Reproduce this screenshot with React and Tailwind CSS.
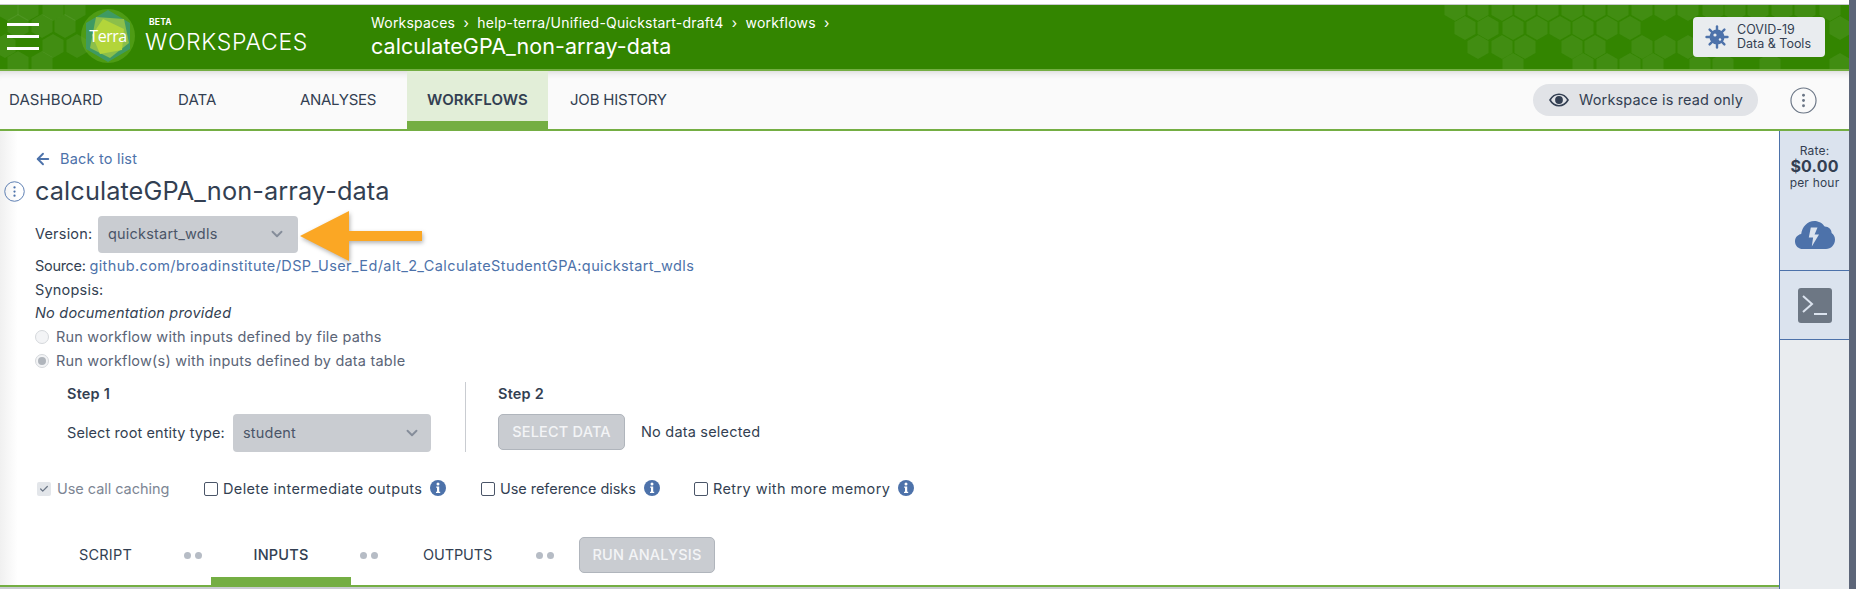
import { ArrowLeft, ChevronDown, Check } from 'lucide-react';

const leftHexes = [
  [8, 9], [28, 9], [53, 9], [75, 9],
  [42, 26], [65, 26], [18, 26],
  [53, 46], [77, 46], [5, 46],
  [18, 63], [42, 63],
];

const rightRows = [
  [9, [55, 78, 102, 125, 148, 172, 195, 218, 242, 265, 288, 313, 335, 358, 382, 405, 430]],
  [28, [65, 88, 113, 137, 160, 183, 207, 230, 440]],
  [47, [78, 102, 125, 172, 195, 242, 265, 288]],
  [65, [113, 183, 207, 230, 253, 300, 323, 370, 440]],
];

function hexPoints(cx, cy) {
  return [
    [cx, cy - 12],
    [cx + 10.5, cy - 6],
    [cx + 10.5, cy + 6],
    [cx, cy + 12],
    [cx - 10.5, cy + 6],
    [cx - 10.5, cy - 6],
  ].join(' ');
}

function HexPattern() {
  return (
    <svg className="absolute inset-0 w-full h-full" viewBox="0 0 1849 64" preserveAspectRatio="none">
      <g fill="#ffffff" fillOpacity="0.07" transform="translate(0,-5)">
        {leftHexes.map(([x, y]) => (
          <polygon key={`l${x}-${y}`} points={hexPoints(x, y)} />
        ))}
        {rightRows.map(([y, xs]) =>
          xs.map((x) => <polygon key={`r${x}-${y}`} points={hexPoints(1400 + x, y)} />)
        )}
      </g>
    </svg>
  );
}

function Hamburger() {
  return (
    <div className="relative ml-[7px] -mt-[2px] w-[32px] flex flex-col gap-[9px]">
      <span className="h-[3px] bg-white" />
      <span className="h-[3px] bg-white" />
      <span className="h-[3px] bg-white" />
    </div>
  );
}

function TerraLogo() {
  return (
    <div className="relative w-[56px] h-[62px] flex items-center justify-center">
      <svg width="56" height="62" viewBox="0 0 56 62" className="absolute inset-0">
        <circle cx="28" cy="31" r="27" fill="#6fb52c" opacity="0.45" />
        <polygon points="28,5 50,18 50,44 28,57 6,44 6,18" fill="#3f9a62" />
        <polygon points="16,12 44,14 49,38 30,53 10,43" fill="#8cbf4a" />
        <polygon points="23,14 44,24 42,45 20,49 12,30" fill="#b3d53a" />
      </svg>
      <span className="relative text-white text-[16px] [font-family:'Open_Sans',sans-serif] tracking-[-0.5px]">Terra</span>
    </div>
  );
}

function VirusIcon() {
  return (
    <svg width="24" height="24" viewBox="0 0 24 24" fill="#4d72aa">
      <circle cx="12" cy="12" r="7.5" />
      <g stroke="#4d72aa" strokeWidth="2.4" strokeLinecap="round">
        <line x1="12" y1="1.5" x2="12" y2="22.5" />
        <line x1="1.5" y1="12" x2="22.5" y2="12" />
        <line x1="4.6" y1="4.6" x2="19.4" y2="19.4" />
        <line x1="19.4" y1="4.6" x2="4.6" y2="19.4" />
      </g>
      <circle cx="10" cy="10" r="1.6" fill="#e9ecef" />
      <circle cx="15" cy="14.5" r="1.2" fill="#e9ecef" />
    </svg>
  );
}

function EyeIcon() {
  return (
    <svg width="20" height="14" viewBox="0 0 20 14">
      <path d="M1 7c2.2-3.8 5.3-5.7 9-5.7S16.800 3.200 19 7c-2.200 3.800-5.300 5.700-9 5.700S3.200 10.800 1 7z" fill="none" stroke="#333f52" strokeWidth="1.6" />
      <circle cx="10" cy="7" r="3.900" fill="#333f52" />
    </svg>
  );
}

function DotsCircle({ size, color }) {
  return (
    <svg width={size} height={size} viewBox="0 0 28 28" fill="none">
      <circle cx="14" cy="14" r="13" stroke={color} strokeWidth="1.200" />
      <g fill={color}>
        <circle cx="14" cy="8.500" r="1.500" />
        <circle cx="14" cy="14" r="1.500" />
        <circle cx="14" cy="19.500" r="1.500" />
      </g>
    </svg>
  );
}

function InfoIcon() {
  return (
    <svg width="16" height="16" viewBox="0 0 16 16" className="shrink-0">
      <circle cx="8" cy="8" r="8" fill="#4d72aa" />
      <circle cx="8" cy="4" r="1.500" fill="#fff" />
      <path d="M6.200 6.500h3v5.200h1v1.300H6v-1.300h1V7.800h-.8z" fill="#fff" />
    </svg>
  );
}

function CloudIcon() {
  return (
    <svg width="40" height="28" viewBox="0 0 40 28">
      <path
        d="M8 28C3.500 28 0 24.600 0 20.400c0-3.700 2.600-6.700 6.200-7.400C7 6 12.400 0 19.300 0c4.500 0 8.300 2.200 10.400 5.600 4.100.1 6.900 2.900 6.900 6.500 2.100 1.300 3.400 3.700 3.400 6.400 0 5.300-4 9.500-9 9.500z"
        fill="#4d72aa"
      />
      <path d="M22.500 6.500h-6.700l-2 10h4.300l-1.300 9 7.200-12h-4.400z" fill="#dbe3ee" />
    </svg>
  );
}

function TerminalIcon() {
  return (
    <div className="w-[34px] h-[35px] rounded-[3px] bg-[#6d7784] flex items-center justify-center">
      <svg width="26" height="22" viewBox="0 0 26 22" fill="none" stroke="#dbe3ee" strokeWidth="2">
        <path d="M1 2l9 8-9 8" />
        <path d="M12 20h13" />
      </svg>
    </div>
  );
}

function CheckRow({ label, info, checked, className, labelClass }) {
  return (
    <div className={`flex items-center ${className}`}>
      {checked ? (
        <span className="w-[14px] h-[14px] rounded-[2px] bg-[#e3e6ea] flex items-center justify-center text-[#6b7686]">
          <Check size={10} strokeWidth={3} />
        </span>
      ) : (
        <span className="w-[14px] h-[14px] rounded-[2px] border border-[#4a5568] bg-white" />
      )}
      <span className={`ml-[5px] whitespace-nowrap ${labelClass} ${checked ? 'text-[#7d8694] ml-[6px]' : 'text-[#333f52]'}`}>{label}</span>
      {info && (
        <span className="ml-[8px] -mt-[3px]">
          <InfoIcon />
        </span>
      )}
    </div>
  );
}

function Radio({ label, selected }) {
  return (
    <div className="flex items-center h-[24px]">
      <span className="w-[14px] h-[14px] rounded-full border border-[#d5d8dc] bg-[#f3f4f6] flex items-center justify-center">
        {selected && <span className="w-[8px] h-[8px] rounded-full bg-[#b0b5bc]" />}
      </span>
      <span className="ml-[7px] text-[#5b6577]">{label}</span>
    </div>
  );
}

function Dots({ className }) {
  return (
    <div className={`w-[18px] flex justify-between ${className}`}>
      <span className="w-[7px] h-[7px] rounded-full bg-[#b6bcc5]" />
      <span className="w-[7px] h-[7px] rounded-full bg-[#b6bcc5]" />
    </div>
  );
}

function Tab({ label, className }) {
  return (
    <div className={`h-[50px] pt-[8px] flex items-center whitespace-nowrap ${className}`}>
      {label}
    </div>
  );
}

export default function App() {
  return (
    <div className="relative w-[1856px] h-[589px] flex overflow-hidden bg-white text-[#333f52] text-[14.500px] tracking-[0.2px] [font-family:Inter,sans-serif]">
      <div className="w-[1849px] flex flex-col">
        <div className="h-[5px] bg-white border-b border-[#c8c9cc]" />

        {/* Green header */}
        <header className="relative h-[66px] bg-[#338500] border-b-2 border-[#74ae43] flex items-center text-white shrink-0">
          <HexPattern />
          <Hamburger />
          <div className="relative ml-[41px] -mt-[2px]">
            <TerraLogo />
          </div>
          <div className="relative ml-[9px] flex flex-col -mt-[2px]">
            <span className="ml-[4px] text-[8.500px] font-bold leading-[12px]">BETA</span>
            <span className="w-[162px] text-[23px] leading-[28px] font-light tracking-[0.7px] whitespace-nowrap">WORKSPACES</span>
          </div>
          <div className="relative ml-[64px] flex flex-col -mt-[2px]">
            <span className="text-[14px] leading-[20px] tracking-[0.2px] whitespace-nowrap">Workspaces &nbsp;›&nbsp; help-terra/Unified-Quickstart-draft4 &nbsp;›&nbsp; workflows &nbsp;›</span>
            <span className="text-[21.500px] leading-[26px] tracking-[0.05px] whitespace-nowrap">calculateGPA_non-array-data</span>
          </div>
          <div className="relative ml-auto mr-[24px] w-[132px] h-[40px] rounded-[4px] bg-[#e9ecef] flex items-center pl-[12px] text-[#333f52]">
            <VirusIcon />
            <div className="ml-[8px] flex flex-col text-[12.500px] leading-[14px] tracking-normal">
              <span>COVID-19</span>
              <span>Data &amp; Tools</span>
            </div>
          </div>
        </header>

        {/* Nav tabs */}
        <nav className="relative h-[60px] shrink-0 border-b-2 border-[#74ae43] bg-[#fafafa] flex text-[15px] tracking-[0.1px] shadow-[inset_0_8px_8px_-8px_rgba(0,0,0,0.2)]">
          <Tab label="DASHBOARD" className="ml-[9px] w-[96px]" />
          <Tab label="DATA" className="ml-[73px] w-[38px]" />
          <Tab label="ANALYSES" className="ml-[84px] w-[74px] tracking-[-0.3px]" />
          <div className="ml-[33px] w-[141px] h-[58px] flex flex-col">
            <Tab label="WORKFLOWS" className="justify-center bg-[#e2eed8] font-semibold" />
            <div className="h-[8px] bg-[#74ae43]" />
          </div>
          <Tab label="JOB HISTORY" className="ml-[22px] tracking-[-0.2px]" />
          <div className="ml-auto mr-[32px] flex items-center gap-[32px] h-[58px] text-[14.500px] tracking-[0.15px]">
            <div className="w-[225px] h-[32px] rounded-full bg-[#e1e3e7] flex items-center pl-[16px]">
              <EyeIcon />
              <span className="ml-[10px]">Workspace is read only</span>
            </div>
            <DotsCircle size={27} color="#6b7686" />
          </div>
        </nav>

        <div className="flex flex-1 min-h-0">
          <div className="w-[1779px] flex flex-col">
            {/* Main content */}
            <main className="relative h-[456px] flex flex-col border-b-2 border-[#74ae43] bg-gradient-to-r from-[#f0f0f0] to-white to-[1%]">
              <div className="pl-[35px] pt-[17px]">
                <div className="flex items-center h-[22px] text-[#4d72aa]">
                  <ArrowLeft size={18} strokeWidth={2.500} className="-ml-[1px]" />
                  <span className="ml-[8px]">Back to list</span>
                </div>
                <div className="relative flex items-center h-[36px] mt-[3px] text-[25.300px] tracking-[0.1px]">
                  <span className="absolute -left-[31px] top-[8px]">
                    <DotsCircle size={21} color="#4d72aa" />
                  </span>
                  calculateGPA_non-array-data
                </div>
                <div className="flex items-center h-[38px] mt-[6px]">
                  <span className="w-[63px]">Version:</span>
                  <div className="w-[200px] h-[37px] rounded-[4px] bg-[#c9ccd1] flex items-center justify-between pl-[10px] pr-[12px] text-[#4a5568]">
                    quickstart_wdls
                    <ChevronDown size={18} strokeWidth={2.500} className="text-[#858d9a]" />
                  </div>
                </div>
                <div className="flex items-center h-[24px] mt-[1px] tracking-[-0.3px]">
                  Source:&nbsp;<span className="text-[#4d72aa] tracking-[0.39px]">github.com/broadinstitute/DSP_User_Ed/alt_2_CalculateStudentGPA:quickstart_wdls</span>
                </div>
                <div className="flex items-center h-[23px]">Synopsis:</div>
                <div className="flex items-center h-[24px] italic">No documentation provided</div>
                <Radio label="Run workflow with inputs defined by file paths" />
                <Radio label="Run workflow(s) with inputs defined by data table" selected />

                {/* Steps */}
                <div className="flex mt-[9px] ml-[32px] h-[70px]">
                  <div className="w-[398px] flex flex-col">
                    <div className="h-[24px] flex items-center font-semibold">Step 1</div>
                    <div className="flex items-center mt-[8px]">
                      <span className="w-[166px] whitespace-nowrap tracking-[0.1px]">Select root entity type:</span>
                      <div className="w-[198px] h-[38px] rounded-[4px] bg-[#c9ccd1] flex items-center justify-between pl-[10px] pr-[10px] text-[#4a5568]">
                        student
                        <ChevronDown size={18} strokeWidth={2.500} className="text-[#858d9a]" />
                      </div>
                    </div>
                  </div>
                  <div className="w-px bg-[#c9ccd1]" />
                  <div className="ml-[32px] flex flex-col">
                    <div className="h-[24px] flex items-center font-semibold">Step 2</div>
                    <div className="flex items-center mt-[8px]">
                      <div className="w-[127px] h-[36px] rounded-[5px] bg-[#c9ccd1] border border-[#b0b5bc] flex items-center justify-center text-[#f3f4f6] font-medium whitespace-nowrap">SELECT DATA</div>
                      <span className="ml-[16px]">No data selected</span>
                    </div>
                  </div>
                </div>

                {/* Options */}
                <div className="flex items-center h-[24px] mt-[25px]">
                  <CheckRow label="Use call caching" labelClass="tracking-[-0.05px]" checked className="ml-[2px] w-[167px]" />
                  <CheckRow label="Delete intermediate outputs" labelClass="tracking-[0.37px]" info className="w-[277px]" />
                  <CheckRow label="Use reference disks" labelClass="tracking-[-0.05px]" info className="w-[213px]" />
                  <CheckRow label="Retry with more memory" labelClass="tracking-[0.4px]" info />
                </div>
              </div>

              {/* Lower tabs */}
              <div className="absolute left-0 right-0 bottom-0 h-[48px] flex">
                <div className="ml-[79px] w-[51px] h-[36px] flex items-center">SCRIPT</div>
                <Dots className="ml-[54px] mt-[15px]" />
                <div className="ml-[9px] w-[140px] flex flex-col">
                  <div className="h-[40px] pb-[4px] flex items-center justify-center font-medium">INPUTS</div>
                  <div className="h-[8px] bg-[#74ae43]" />
                </div>
                <Dots className="ml-[9px] mt-[15px]" />
                <div className="ml-[45px] w-[68px] h-[36px] flex items-center tracking-[-0.1px]">OUTPUTS</div>
                <Dots className="ml-[45px] mt-[15px]" />
                <div className="ml-[25px] w-[136px] h-[36px] rounded-[5px] bg-[#c9ccd1] border border-[#b0b5bc] flex items-center justify-center text-[#f3f4f6] font-medium whitespace-nowrap">RUN ANALYSIS</div>
              </div>

              {/* Annotation arrow */}
              <svg className="absolute left-[295px] top-[75px] drop-shadow-[1px_2px_2px_rgba(0,0,0,0.3)]" width="135" height="60" viewBox="0 0 135 60">
                <path d="M5 30 54 5v20h73v10H54v20z" fill="#fba724" />
              </svg>
            </main>
            <div className="flex-1 bg-[#c9ccd1]" />
          </div>

          {/* Side rail */}
          <aside className="w-[70px] flex flex-col border-l border-[#4d72aa] bg-[#e9ecef]">
            <div className="h-[140px] bg-[#dbe3ee] border-b border-[#4d72aa] flex flex-col items-center pt-[12px]">
              <span className="text-[12px] leading-[15px]">Rate:</span>
              <span className="text-[16px] leading-[17px] font-bold">$0.00</span>
              <span className="text-[12px] leading-[15px]">per hour</span>
              <div className="mt-[31px]">
                <CloudIcon />
              </div>
            </div>
            <div className="h-[69px] bg-[#dbe3ee] border-b border-[#4d72aa] flex items-center justify-center">
              <TerminalIcon />
            </div>
          </aside>
        </div>
      </div>
      <div className="flex-1 bg-[#5d6679]" />
    </div>
  );
}
